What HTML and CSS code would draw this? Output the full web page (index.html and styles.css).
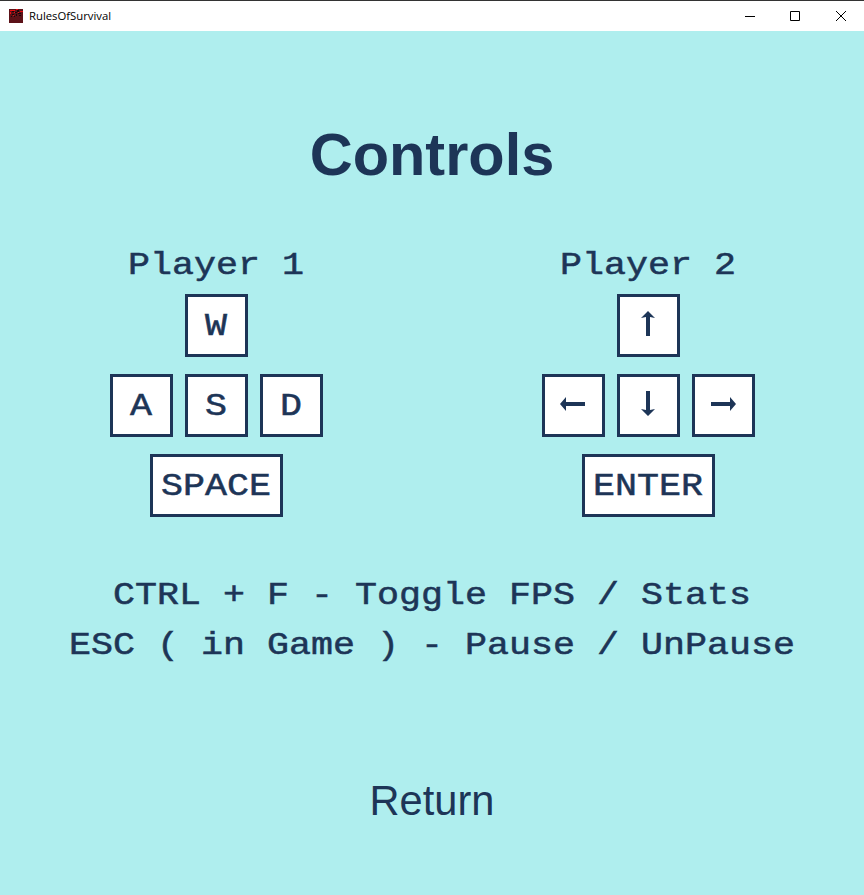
FILE: index.html
```html
<!DOCTYPE html>
<html lang="en">
<head>
<meta charset="utf-8">
<title>RulesOfSurvival</title>
<link rel="stylesheet" href="styles.css">
</head>
<body>
<header class="titlebar">
  <svg class="app-icon" width="14" height="14" viewBox="0 0 14 14" shape-rendering="crispEdges"><path fill="#5c1218" d="M0 0h14v14H0z"/><path fill="#180609" d="M3 2h2v1H3zM6 3h2v1H6zM8 1h2v2H8zM3 5h2v1H3zM7 5h1v2H7zM2 7h1v1H2zM5 7h1v1H5zM9 4h3v1H9zM10 6h2v1h-2z"/><path fill="#e80d12" d="M1 1h5v1H1zM7 0h2v1H7zM11 2h3v1h-3zM1 3h1v2H1zM5 3h1v1H5zM4 6h1v1H4zM9 3h1v1H9z"/></svg>
  <span class="app-name">RulesOfSurvival</span>
  <div class="window-buttons">
    <svg width="10" height="10" viewBox="0 0 10 10"><path d="M0 5.5h10"/></svg>
    <svg width="10" height="10" viewBox="0 0 10 10"><path d="M.5.5h9v9h-9z"/></svg>
    <svg class="close" width="10" height="10" viewBox="0 0 10 10"><path d="M0 0l10 10M10 0L0 10"/></svg>
  </div>
</header>
<main class="screen">
  <h1 class="title">Controls</h1>
  <div class="players">
    <section class="player">
      <h2 class="player-name mono">Player 1</h2>
      <div class="keys">
        <div class="row"><kbd class="key"><span class="mono">W</span></kbd></div>
        <div class="row">
          <kbd class="key"><span class="mono">A</span></kbd>
          <kbd class="key"><span class="mono">S</span></kbd>
          <kbd class="key"><span class="mono">D</span></kbd>
        </div>
        <div class="row"><kbd class="key wide"><span class="mono">SPACE</span></kbd></div>
      </div>
    </section>
    <section class="player">
      <h2 class="player-name mono">Player 2</h2>
      <div class="keys">
        <div class="row"><kbd class="key arrow vertical"><svg width="14" height="25" viewBox="0 0 14 25"><path d="M7 0l7 7-5-1v19H5V6L0 7z"/></svg></kbd></div>
        <div class="row">
          <kbd class="key arrow left"><svg width="25" height="14" viewBox="0 0 25 14"><path d="M0 7l6-7v5h19v4H6v5z"/></svg></kbd>
          <kbd class="key arrow vertical"><svg width="14" height="25" viewBox="0 0 14 25"><path d="M7 25l7-7-5 1V0H5v19l-5-1z"/></svg></kbd>
          <kbd class="key arrow"><svg width="25" height="14" viewBox="0 0 25 14"><path d="M25 7l-6-7v5H0v4h19v5z"/></svg></kbd>
        </div>
        <div class="row"><kbd class="key wide"><span class="mono">ENTER</span></kbd></div>
      </div>
    </section>
  </div>
  <div class="shortcuts">
    <p class="mono">CTRL + F - Toggle FPS / Stats</p>
    <p class="mono">ESC ( in Game ) - Pause / UnPause</p>
  </div>
  <a class="return">Return</a>
</main>
</body>
</html>
```
FILE: styles.css
```css
* { box-sizing: border-box; margin: 0; padding: 0; }
body {
  height: 895px;
  display: flex;
  flex-direction: column;
  background: #afeeee;
  color: #1d3557;
  overflow: hidden;
}
.titlebar {
  height: 31px;
  flex: none;
  display: flex;
  align-items: center;
  padding: 0 18px 0 9px;
  border-top: 1px solid #333;
  background: #fff;
  color: #000;
}
.app-icon { margin: 0 6px 1px 0; }
.app-name { font: 11.3px/28px "Open Sans", sans-serif; }
.window-buttons { margin: 0 0 1px auto; display: flex; gap: 35px; }
.window-buttons svg { display: block; fill: none; stroke: #000; stroke-width: 1; }
.window-buttons .close { margin-left: 1px; }
.screen {
  flex: 1;
  display: flex;
  flex-direction: column;
  align-items: center;
  padding-top: 89px;
}
.title { font: bold 59.5px/70px "Liberation Sans", sans-serif; }
.players {
  width: 864px;
  margin-top: 56px;
  display: grid;
  grid-template-columns: 1fr 1fr;
}
/* Wide, low letterforms on a 22px pitch */
.mono {
  font-family: "Liberation Mono", monospace;
  font-size: 36.66px;
  font-weight: normal;
  white-space: nowrap;
  transform: translateY(-1px) scaleY(0.873);
  -webkit-text-stroke: 0.6px #1d3557;
}
.player-name { line-height: 40px; text-align: center; }
.keys { width: 213px; margin: 8px 0 0 110px; display: grid; gap: 17px; }
.row { display: flex; justify-content: center; gap: 12px; }
.key {
  width: 63px;
  height: 63px;
  display: flex;
  align-items: center;
  justify-content: center;
  padding: 2px 1px 0 0;
  border: 3px solid #1d3557;
  background: #fff;
}
.key .mono { line-height: 40px; }
.wide { width: 133px; }
.arrow { padding: 0 0 3px; }
.arrow.vertical { padding: 0 1px 4px 0; }
.arrow.left { padding-right: 2px; }
.arrow svg { display: block; fill: #1d3557; }
.shortcuts { margin-top: 54px; text-align: center; line-height: 50px; }
.return { margin-top: 105px; font: 41.6px/50px "Liberation Sans", sans-serif; }
```
